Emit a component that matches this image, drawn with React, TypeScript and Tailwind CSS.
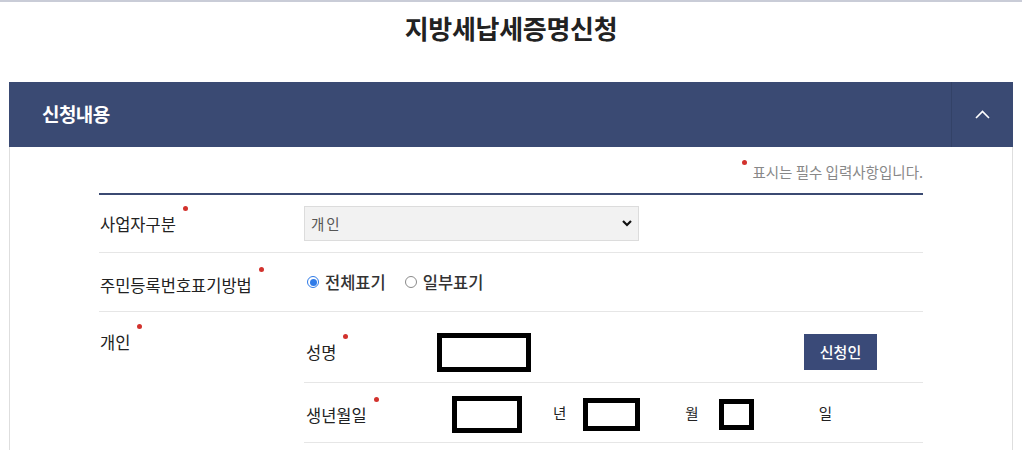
import type { ReactNode } from "react";

// 필수 표시 (빨간 점)
function Required({ children, className = "" }: { children: ReactNode; className?: string }) {
  return (
    <span className={"relative inline-block " + className}>
      {children}
      <span className="absolute -right-[12px] -top-[7px] w-[5px] h-[5px] rounded-full bg-[#d2322d]" />
    </span>
  );
}

function Radio({ checked, label }: { checked?: boolean; label: string }) {
  return (
    <label className="flex items-center gap-[6px] text-[16.5px] font-medium text-[#333] leading-[22px]">
      {checked ? (
        <span className="w-[12px] h-[12px] rounded-full border-[1.5px] border-[#2f7be8] bg-white flex items-center justify-center">
          <span className="w-[7px] h-[7px] rounded-full bg-[#2f7be8]" />
        </span>
      ) : (
        <span className="w-[12px] h-[12px] rounded-full border border-[#8a8a8a] bg-white" />
      )}
      {label}
    </label>
  );
}

export default function App() {
  return (
    <div className="h-[450px] overflow-hidden bg-white font-['Noto_Sans_CJK_KR','Noto_Sans',sans-serif] text-[#222]">
      {/* 상단 얇은 선 */}
      <div className="h-[2px] bg-[#c9ccd7]" />

      {/* 제목 */}
      <h1 className="pt-[10px] text-center text-[26px] font-bold leading-[32px] text-[#222] tracking-[-0.3px]">
        지방세납세증명신청
      </h1>

      {/* 패널 */}
      <div className="mx-[9px] mt-[38px] pb-[40px] border-x border-[#dedede]">
        {/* 패널 헤더 */}
        <div className="h-[65px] -mx-px bg-[#3a4a73] flex items-stretch">
          <div className="flex-1 flex items-center pl-[33px] text-[19px] font-bold text-white tracking-[-0.6px]">
            신청내용
          </div>
          <div className="w-[62px] border-l border-[#334267] flex items-center justify-center">
            <svg width="15" height="9" viewBox="0 0 15 9" fill="none">
              <polyline points="1,8 7.5,1.5 14,8" stroke="white" strokeWidth="1.6" />
            </svg>
          </div>
        </div>

        {/* 패널 본문 */}
        <div className="px-[89px]">
          <p className="pt-[15px] text-right text-[14.5px] leading-[20px] text-[#888]">
            <span className="relative inline-block">
              <span className="absolute -left-[10px] -top-[2px] w-[5px] h-[5px] rounded-full bg-[#d2322d]" />
              표시는 필수 입력사항입니다.
            </span>
          </p>

          <div className="mt-[11px] border-t-2 border-[#3b4a72]">
            {/* 사업자구분 */}
            <div className="h-[58px] flex items-center border-b border-[#e6e6e6]">
              <div className="w-[205px] pl-[1px] text-[16.5px] leading-[22px]">
                <Required>사업자구분</Required>
              </div>
              <div className="relative w-[335px] h-[35px]">
                <select className="appearance-none w-full h-full bg-[#f2f2f2] border border-[#dcdcdc] pl-[6px] text-[14.5px] tracking-[2px] text-[#555] outline-none">
                  <option>개인</option>
                </select>
                <svg
                  className="absolute right-[7px] top-[14px] pointer-events-none"
                  width="10"
                  height="7"
                  viewBox="0 0 10 7"
                  fill="none"
                >
                  <polyline points="1,1 5,5 9,1" stroke="#111" strokeWidth="2.2" />
                </svg>
              </div>
            </div>

            {/* 주민등록번호표기방법 */}
            <div className="h-[59px] flex items-center border-b border-[#e6e6e6]">
              <div className="w-[205px] pl-[1px] text-[16.5px] leading-[22px] pt-[5px]">
                <Required>주민등록번호표기방법</Required>
              </div>
              <div className="flex items-center gap-[19px] pl-[3px]">
                <Radio checked label="전체표기" />
                <Radio label="일부표기" />
              </div>
            </div>

            {/* 개인 */}
            <div className="flex">
              <div className="w-[205px] pl-[1px] pt-[19px] text-[16.5px] leading-[22px]">
                <Required>개인</Required>
              </div>
              <div className="flex-1">
                {/* 성명 */}
                <div className="h-[71px] pt-[10px] flex items-center border-b border-[#e6e6e6] text-[16.5px] leading-[22px]">
                  <div className="w-[133px] pl-[2px]">
                    <Required>성명</Required>
                  </div>
                  <div className="w-[94px] h-[39px] border-[5px] border-black" />
                  <button
                    type="button"
                    className="ml-[273px] w-[73px] h-[36px] bg-[#3a4a78] text-white text-[15px] font-medium"
                  >
                    신청인
                  </button>
                </div>

                {/* 생년월일 */}
                <div className="h-[60px] flex items-center border-b border-[#e6e6e6] text-[16.5px] leading-[22px]">
                  <div className="w-[148px] pl-[2px] pt-[4px]">
                    <Required>생년월일</Required>
                  </div>
                  <div className="w-[70px] h-[37px] border-[5px] border-black mt-[4px]" />
                  <span className="ml-[31px] text-[14.5px]">년</span>
                  <div className="ml-[17px] w-[57px] h-[33px] border-[5px] border-black mt-[4px]" />
                  <span className="ml-[45px] text-[14.5px]">월</span>
                  <div className="ml-[20px] w-[35px] h-[31px] border-[5px] border-black mt-[4px]" />
                  <span className="ml-[65px] text-[14.5px]">일</span>
                </div>
              </div>
            </div>
          </div>
        </div>
      </div>
    </div>
  );
}
